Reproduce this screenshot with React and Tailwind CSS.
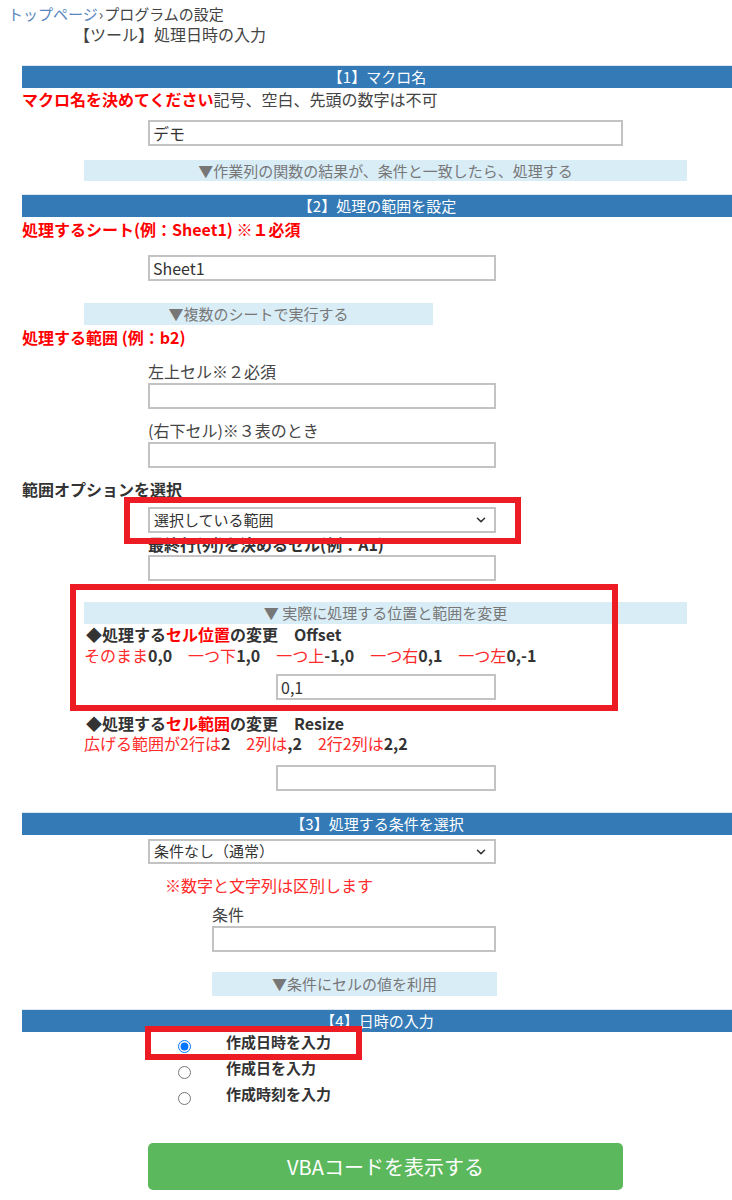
import { ChevronDown } from "lucide-react"

const font = { fontFamily: '"Noto Sans CJK JP", "Liberation Sans", sans-serif' }

function Bar({ children, className = "" }) {
  return (
    <div
      className={`h-[23px] border-t border-[#dbe6f1] bg-[#337ab7] text-center text-[15px] leading-[22px] text-white ${className}`}
    >
      {children}
    </div>
  )
}

function Toggle({ children, className = "" }) {
  return (
    <div className={`bg-[#d9edf7] text-center text-[15px] text-[#777] ${className}`}>
      {children}
    </div>
  )
}

function TextBox({ value = "", className = "" }) {
  return (
    <input
      type="text"
      defaultValue={value}
      className={`block border-2 border-[#c3c3c3] bg-white px-[3px] text-[16px] text-[#333] outline-none ${className}`}
    />
  )
}

function Select({ value, className = "" }) {
  return (
    <div
      className={`flex items-center justify-between border-2 border-[#c3c3c3] bg-white pl-[4px] pr-[6px] text-[15px] text-[#333] ${className}`}
    >
      <span>{value}</span>
      <ChevronDown size={14} strokeWidth={2.75} className="text-[#333]" />
    </div>
  )
}

function Radio({ label, checked }) {
  return (
    <div className="flex h-[26px] items-center">
      <input
        type="radio"
        name="dt"
        defaultChecked={checked}
        className="m-0 ml-[156px] h-[13px] w-[13px]"
      />
      <span className="-mt-[8px] ml-[35px] text-[15px] font-bold leading-[20px] text-[#333]">
        {label}
      </span>
    </div>
  )
}

export default function App() {
  return (
    <div className="relative min-h-[1200px] bg-white text-[#333]" style={font}>
      {/* breadcrumb */}
      <div className="pl-[8px] pt-[4px] text-[15px] leading-[20px]">
        <span className="text-[#5b87be]">トップページ</span>
        <span className="mx-[1px] text-[#555]">›</span>
        <span className="text-[#444]">プログラムの設定</span>
      </div>
      <div className="pl-[74px] text-[16px] leading-[20px] text-[#444]">
        【ツール】処理日時の入力
      </div>

      <div className="ml-[22px] mt-[21px]">
        {/* 1 */}
        <Bar>【1】マクロ名</Bar>
        <div className="mt-[1px] text-[16px] leading-[20px]">
          <span className="font-bold text-[#ff0000]">マクロ名を決めてください</span>
          <span className="text-[#444]">記号、空白、先頭の数字は不可</span>
        </div>
        <TextBox value="デモ" className="ml-[126px] mt-[11px] h-[26px] w-[475px]" />
        <Toggle className="ml-[62px] mt-[14px] h-[21px] w-[603px] leading-[21px]">
          ▼作業列の関数の結果が、条件と一致したら、処理する
        </Toggle>

        {/* 2 */}
        <Bar className="mt-[13px]">【2】処理の範囲を設定</Bar>
        <div className="mt-[2px] text-[16px] font-bold leading-[20px] text-[#ff0000]">
          処理するシート(例：Sheet1) ※１必須
        </div>
        <TextBox value="Sheet1" className="ml-[126px] mt-[16px] h-[26px] w-[348px]" />
        <Toggle className="ml-[62px] mt-[22px] h-[22px] w-[349px] leading-[22px]">
          ▼複数のシートで実行する
        </Toggle>
        <div className="mt-[2px] text-[16px] font-bold leading-[20px] text-[#ff0000]">
          処理する範囲 (例：b2)
        </div>

        <div className="ml-[126px] mt-[14px] text-[16px] leading-[20px] text-[#444]">
          左上セル※２必須
        </div>
        <TextBox className="ml-[126px] mt-[2px] h-[26px] w-[348px]" />
        <div className="ml-[126px] mt-[11px] text-[16px] leading-[20px] text-[#444]">
          (右下セル)※３表のとき
        </div>
        <TextBox className="ml-[126px] mt-[2px] h-[26px] w-[348px]" />

        <div className="mt-[11px] text-[16px] font-bold leading-[20px] text-[#333]">
          範囲オプションを選択
        </div>
        <Select value="選択している範囲" className="ml-[126px] mt-[8px] h-[26px] w-[348px]" />
        <div className="ml-[126px] mt-[1px] text-[16px] font-bold leading-[20px] text-[#333]">
          最終行(列)を決めるセル(例：A1)
        </div>
        <TextBox className="ml-[126px] mt-[1px] h-[26px] w-[348px]" />

        <Toggle className="ml-[62px] mt-[21px] h-[22px] w-[603px] leading-[22px]">
          ▼ 実際に処理する位置と範囲を変更
        </Toggle>
        <div className="ml-[64px] text-[16px] font-bold leading-[20px] text-[#333]">
          ◆処理する<span className="text-[#ff0000]">セル位置</span>の変更　Offset
        </div>
        <div className="ml-[62px] mt-[1px] text-[16px] leading-[20px] text-[#ff2a2a]">
          そのまま<b className="text-[#333]">0,0</b>　一つ下<b className="text-[#333]">1,0</b>　一つ上<b className="text-[#333]">-1,0</b>　一つ右<b className="text-[#333]">0,1</b>　一つ左<b className="text-[#333]">0,-1</b>
        </div>
        <TextBox value="0,1" className="ml-[254px] mt-[9px] h-[26px] w-[220px]" />

        <div className="ml-[64px] mt-[13px] text-[16px] font-bold leading-[20px] text-[#333]">
          ◆処理する<span className="text-[#ff0000]">セル範囲</span>の変更　Resize
        </div>
        <div className="ml-[62px] text-[16px] leading-[20px] text-[#ff2a2a]">
          広げる範囲が2行は<b className="text-[#333]">2</b>　2列は<b className="text-[#333]">,2</b>　2行2列は<b className="text-[#333]">2,2</b>
        </div>
        <TextBox className="ml-[254px] mt-[12px] h-[26px] w-[220px]" />

        {/* 3 */}
        <Bar className="mt-[21px]">【3】処理する条件を選択</Bar>
        <Select value="条件なし（通常）" className="ml-[126px] mt-[4px] h-[25px] w-[348px]" />
        <div className="ml-[143px] mt-[11px] text-[16px] leading-[20px] text-[#ff2a2a]">
          ※数字と文字列は区別します
        </div>
        <div className="ml-[190px] mt-[9px] text-[16px] leading-[20px] text-[#444]">
          条件
        </div>
        <TextBox className="ml-[190px] mt-[2px] h-[26px] w-[284px]" />
        <Toggle className="ml-[190px] mt-[20px] h-[24px] w-[285px] leading-[24px]">
          ▼条件にセルの値を利用
        </Toggle>

        {/* 4 */}
        <Bar className="mt-[13px]">【4】日時の入力</Bar>
        <div className="mt-[1px]">
          <Radio label="作成日時を入力" checked />
          <Radio label="作成日を入力" />
          <Radio label="作成時刻を入力" />
        </div>

        <button className="ml-[126px] mt-[32px] h-[47px] w-[475px] rounded-[5px] bg-[#5cb85c] text-[20px] text-white">
          VBAコードを表示する
        </button>
      </div>

      {/* red annotation boxes */}
      <div className="pointer-events-none absolute left-[124px] top-[497px] h-[47px] w-[397px] border-[6px] border-[#ed1c24]" />
      <div className="pointer-events-none absolute left-[70px] top-[584px] h-[127px] w-[548px] border-[6px] border-[#ed1c24]" />
      <div className="pointer-events-none absolute left-[145px] top-[1026px] h-[34px] w-[217px] border-[6px] border-[#ed1c24]" />
    </div>
  )
}
